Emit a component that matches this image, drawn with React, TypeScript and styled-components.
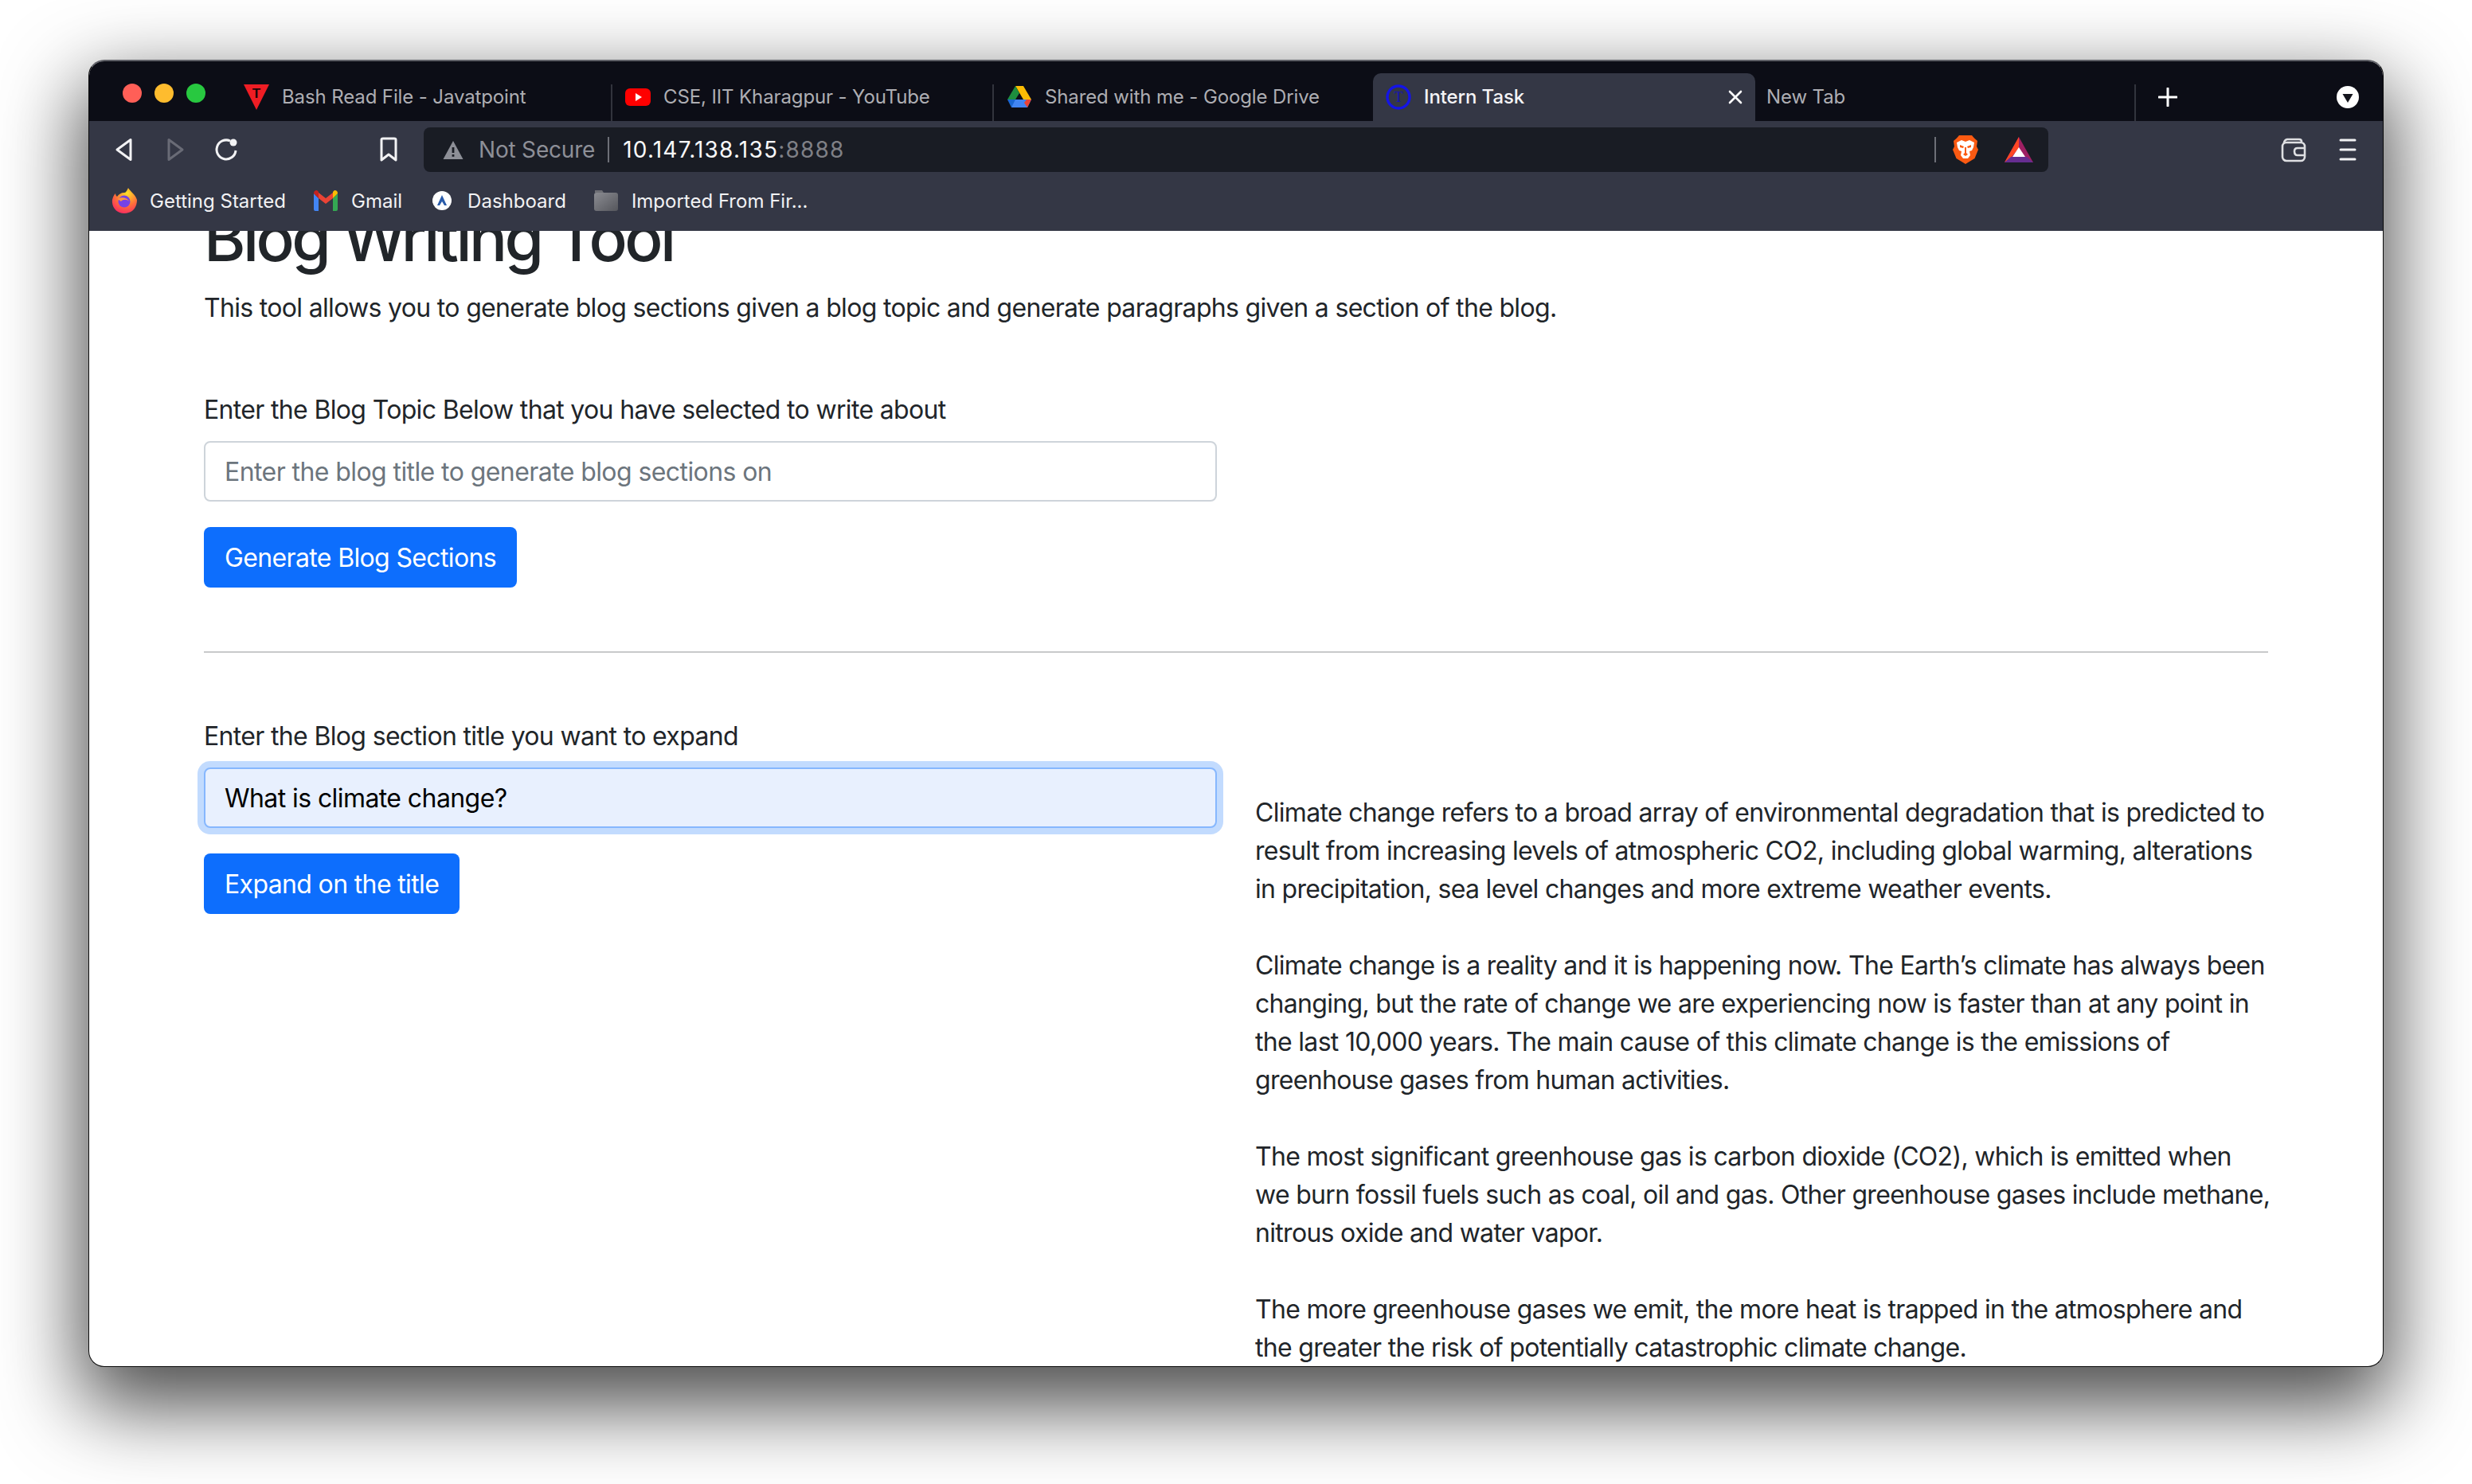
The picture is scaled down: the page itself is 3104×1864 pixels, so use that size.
import styled, { createGlobalStyle } from "styled-components";

const GlobalStyle = createGlobalStyle`
  html, body {
    margin: 0;
    padding: 0;
    background: #ffffff;
  }
  * {
    box-sizing: border-box;
  }
`;

const Stage = styled.div`
  width: 3104px;
  height: 1864px;
  padding: 75px 0 0 111px;
  background: #ffffff;
  overflow: hidden;
  font-family: Inter, "Liberation Sans", sans-serif;
`;

const Window = styled.div`
  display: flex;
  flex-direction: column;
  width: 2882px;
  height: 1642px;
  border: 1px solid #0a0a0a;
  border-top: 2px solid #5f6067;
  border-radius: 20px;
  overflow: hidden;
  background: #ffffff;
  box-shadow: 0 40px 100px 10px rgba(0, 0, 0, 0.7);
`;

const TabStrip = styled.div`
  display: flex;
  align-items: flex-end;
  flex: 0 0 75px;
  background: #0c0d16;
`;

const Lights = styled.div`
  display: flex;
  align-self: flex-start;
  gap: 16px;
  margin: 28px 32px 0 42px;
`;

const Light = styled.span<{ $color: string }>`
  width: 24px;
  height: 24px;
  border-radius: 50%;
  background: ${(props) => props.$color};
`;

const Tab = styled.div<{ $active?: boolean; $width: number; $plain?: boolean }>`
  display: flex;
  align-items: center;
  gap: 16px;
  flex: 0 0 ${(props) => props.$width}px;
  height: 60px;
  padding-left: ${(props) => (props.$plain ? 14 : 16)}px;
  padding-right: 16px;
  border-radius: 10px 10px 0 0;
  background: ${(props) => (props.$active ? "#343745" : "transparent")};
  color: ${(props) => (props.$active ? "#f4f4f6" : "#aeaeb3")};
  font-size: 24px;
  font-weight: ${(props) => (props.$active ? 500 : 400)};
  letter-spacing: -0.12px;
  white-space: nowrap;
`;

const TabTitle = styled.span`
  flex: 1;
  padding-bottom: 2px;
`;

const TabDivider = styled.span`
  flex: 0 0 2px;
  height: 46px;
  background: #32343d;
`;

const NewTabButton = styled.svg`
  width: 24px;
  height: 24px;
  margin: 0 0 18px 28px;
`;

const TabMenu = styled.svg`
  width: 28px;
  height: 38px;
  margin: 0 30px 11px auto;
`;

const Toolbar = styled.div`
  display: flex;
  align-items: center;
  flex: 0 0 72px;
  padding-left: 28px;
  background: #343745;
`;

const NavGroup = styled.div`
  display: flex;
  align-items: center;
  gap: 32px;
`;

const ToolIcon = styled.svg<{ $left?: number }>`
  width: 32px;
  height: 36px;
  flex: 0 0 32px;
  margin-left: ${(props) => props.$left ?? 0}px;
`;

const UrlBar = styled.div`
  display: flex;
  align-items: center;
  width: 2040px;
  height: 56px;
  margin-left: 28px;
  padding: 0 19px 0 24px;
  border-radius: 8px;
  background: #191c24;
  font-size: 28px;
`;

const WarnIcon = styled.svg`
  width: 26px;
  height: 24px;
  margin-right: 19px;
`;

const NotSecure = styled.span`
  color: #8d8f97;
  letter-spacing: -0.2px;
`;

const UrlDivider = styled.span`
  width: 2px;
  height: 32px;
  margin-left: 16px;
  background: #6d6f77;
`;

const UrlHost = styled.span`
  margin-left: 17px;
  color: #f8f8f8;
  letter-spacing: 1.2px;
`;

const UrlPort = styled.span`
  color: #7f8086;
`;

const RightDivider = styled(UrlDivider)`
  margin-left: auto;
`;

const ShieldIcon = styled.svg`
  width: 32px;
  height: 36px;
  margin-left: 21px;
`;

const BatIcon = styled.svg`
  width: 36px;
  height: 32px;
  margin-left: 33px;
`;

const BookmarkBar = styled.div`
  display: flex;
  align-items: center;
  gap: 34px;
  flex: 0 0 66px;
  padding: 0 0 10px 28px;
  background: #343745;
  color: #f2f2f4;
  font-size: 24px;
`;

const Bookmark = styled.div`
  display: flex;
  align-items: center;
  gap: 16px;
  white-space: nowrap;
`;

const BookmarkIcon = styled.svg`
  width: 32px;
  height: 32px;
  flex: 0 0 32px;
`;

const Content = styled.div`
  flex: 1;
  min-height: 0;
  padding: 0 144px;
  overflow: hidden;
  color: #212529;
  font-size: 32px;
  line-height: 48px;
  letter-spacing: -0.66px;
`;

const Heading = styled.h1`
  margin: -39px 0 16px;
  font-size: 80px;
  font-weight: 500;
  line-height: 96px;
  letter-spacing: -3.6px;
`;

const Lead = styled.p`
  margin: 0 0 80px;
  letter-spacing: -0.68px;
`;

const Label = styled.label`
  display: block;
  margin-bottom: 15px;
`;

const Field = styled.input<{ $focused?: boolean }>`
  display: block;
  width: 1272px;
  height: 76px;
  padding: 0 24px;
  border: 2px solid ${(props) => (props.$focused ? "#86b7fe" : "#ced4da")};
  border-radius: 8px;
  outline: none;
  background: ${(props) => (props.$focused ? "#e8f0fe" : "#ffffff")};
  box-shadow: ${(props) =>
    props.$focused ? "0 0 0 8px rgba(13, 110, 253, 0.25)" : "none"};
  color: #000000;
  font-family: inherit;
  font-size: 32px;
  letter-spacing: -0.58px;

  &::placeholder {
    color: #6c757d;
    opacity: 1;
  }
`;

const PrimaryButton = styled.button`
  display: block;
  height: 76px;
  margin-top: 32px;
  padding: 0 26px;
  border: 0;
  border-radius: 8px;
  background: #0d6efd;
  color: #ffffff;
  font-family: inherit;
  font-size: 32px;
  letter-spacing: -0.64px;
`;

const Rule = styled.hr`
  height: 2px;
  margin: 80px 0 81px;
  border: 0;
  background: #c8c9ca;
`;

const Columns = styled.div`
  display: grid;
  grid-template-columns: 1272px 1272px;
  column-gap: 48px;
`;

const Output = styled.div`
  padding-top: 96px;
  letter-spacing: -0.69px;
`;

const OutputPara = styled.p`
  margin: 0 0 48px;
  white-space: nowrap;
`;

const paragraphs = [
  [
    "Climate change refers to a broad array of environmental degradation that is predicted to",
    "result from increasing levels of atmospheric CO2, including global warming, alterations",
    "in precipitation, sea level changes and more extreme weather events.",
  ],
  [
    "Climate change is a reality and it is happening now. The Earth\u2019s climate has always been",
    "changing, but the rate of change we are experiencing now is faster than at any point in",
    "the last 10,000 years. The main cause of this climate change is the emissions of",
    "greenhouse gases from human activities.",
  ],
  [
    "The most significant greenhouse gas is carbon dioxide (CO2), which is emitted when",
    "we burn fossil fuels such as coal, oil and gas. Other greenhouse gases include methane,",
    "nitrous oxide and water vapor.",
  ],
  [
    "The more greenhouse gases we emit, the more heat is trapped in the atmosphere and",
    "the greater the risk of potentially catastrophic climate change.",
  ],
];

function App() {
  return (
    <>
      <GlobalStyle />
      <Stage>
        <Window>
          <TabStrip>
            <Lights>
              <Light $color="#ff5f57" />
              <Light $color="#febc2e" />
              <Light $color="#28c840" />
            </Lights>
            <Tab $width={477}>
              <BookmarkIcon viewBox="0 0 32 32">
                <path d="M0 0H32L16 32Z" fill="#ef1d24" />
                <text x="16" y="17" textAnchor="middle" fontSize="17" fontWeight="700" fontFamily="Liberation Sans" fill="#1b0708">T</text>
              </BookmarkIcon>
              <TabTitle>Bash Read File - Javatpoint</TabTitle>
            </Tab>
            <TabDivider />
            <Tab $width={477}>
              <BookmarkIcon viewBox="0 0 32 32">
                <rect x="0" y="5" width="32" height="22" rx="6" fill="#ff0000" />
                <path d="M13 11L21 16L13 21Z" fill="#ffffff" />
              </BookmarkIcon>
              <TabTitle>CSE, IIT Kharagpur - YouTube</TabTitle>
            </Tab>
            <TabDivider />
            <Tab $width={476}>
              <BookmarkIcon viewBox="0 0 32 32">
                <path d="M11 2H21L31 19H21Z" fill="#fbbc04" />
                <path d="M11 2L16 11L11 19H1Z" fill="#1e8e3e" />
                <path d="M8 19H31L26 29H6Z" fill="#4285f4" />
                <path d="M1 19L6 29L11 19Z" fill="#1967d2" />
                <path d="M25 19H31L26 29L22 23Z" fill="#ea4335" />
              </BookmarkIcon>
              <TabTitle>Shared with me - Google Drive</TabTitle>
            </Tab>
            <Tab $active $width={480}>
              <BookmarkIcon viewBox="0 0 32 32">
                <circle cx="16" cy="16" r="14" fill="none" stroke="#1414e6" strokeWidth="3.4" />
                <text x="16" y="22" textAnchor="middle" fontSize="18" fontFamily="Liberation Serif" fill="#1414b4">T</text>
              </BookmarkIcon>
              <TabTitle>Intern Task</TabTitle>
              <svg width="18" height="18" viewBox="0 0 18 18">
                <path d="M2 2L16 16M16 2L2 16" stroke="#ffffff" strokeWidth="2.6" strokeLinecap="round" />
              </svg>
            </Tab>
            <Tab $plain $width={476}>
              <TabTitle>New Tab</TabTitle>
            </Tab>
            <TabDivider />
            <NewTabButton viewBox="0 0 24 24">
              <path d="M12 1V23M1 12H23" stroke="#ffffff" strokeWidth="3" strokeLinecap="round" />
            </NewTabButton>
            <TabMenu viewBox="0 0 28 28">
              <circle cx="14" cy="14" r="14" fill="#ffffff" />
              <path d="M7.5 10H20.5L14 21Z" fill="#14151d" />
            </TabMenu>
          </TabStrip>
          <Toolbar>
            <NavGroup>
              <ToolIcon viewBox="0 0 32 36">
                <path d="M24 5.5V30.5L7 18Z" fill="none" stroke="#f2f2f4" strokeWidth="3" strokeLinejoin="round" />
              </ToolIcon>
              <ToolIcon viewBox="0 0 32 36">
                <path d="M8 5.5V30.5L25 18Z" fill="none" stroke="#696b76" strokeWidth="3" strokeLinejoin="round" />
              </ToolIcon>
              <ToolIcon viewBox="0 0 32 36">
                <path d="M21 7A12 12 0 1 0 28 19" fill="none" stroke="#f2f2f4" strokeWidth="3" />
                <circle cx="25" cy="9" r="4.5" fill="#f2f2f4" />
              </ToolIcon>
            </NavGroup>
            <ToolIcon $left={172} viewBox="0 0 32 36">
              <path d="M7 5.5Q7 4 9 4H23Q25 4 25 5.5V31L16 24L7 31Z" fill="none" stroke="#f2f2f4" strokeWidth="3" strokeLinejoin="round" />
            </ToolIcon>
            <UrlBar>
              <WarnIcon viewBox="0 0 26 24">
                <path d="M13 1L25.5 24H0.5Z" fill="#8d8f97" />
                <rect x="11.6" y="9" width="2.8" height="7" fill="#191c24" />
                <rect x="11.6" y="18" width="2.8" height="2.8" fill="#191c24" />
              </WarnIcon>
              <NotSecure>Not Secure</NotSecure>
              <UrlDivider />
              <UrlHost>
                10.147.138.135<UrlPort>:8888</UrlPort>
              </UrlHost>
              <RightDivider />
              <ShieldIcon viewBox="0 0 32 36">
                <path d="M8 0H24L27 3.5L31 7L30 14L32 18L27.5 29L16 36L4.5 29L0 18L2 14L1 7L5 3.5Z" fill="#fb5a12" />
                <path d="M5 9L11 6L16 8L21 6L27 9L26 15L24 19L21 20L22 25L19 29H13L10 25L11 20L8 19L6 15Z" fill="#ffffff" />
                <path d="M9 12L14 14L13 16L9 15ZM23 12L18 14L19 16L23 15ZM15 15H17V22L19 24L16 26L13 24L15 22Z" fill="#fb5a12" />
              </ShieldIcon>
              <BatIcon viewBox="0 0 36 32">
                <path d="M18 0L36 32H0Z" fill="#9e1f63" />
                <path d="M18 0V14L8 26L0 32Z" fill="#ff4724" />
                <path d="M0 32L8 25H28L36 32Z" fill="#662d91" />
                <path d="M18 13L26 25H10Z" fill="#ffffff" />
              </BatIcon>
            </UrlBar>
            <ToolIcon $left={292} viewBox="0 0 32 36">
              <path d="M4 10Q4 6 8 5H23Q26 5 26 8" fill="none" stroke="#dedfe2" strokeWidth="2.6" />
              <rect x="2" y="9" width="28" height="23" rx="5" fill="none" stroke="#dedfe2" strokeWidth="2.6" />
              <path d="M30 16H21Q17 16 17 20Q17 25 21 25H30" fill="none" stroke="#dedfe2" strokeWidth="2.6" />
            </ToolIcon>
            <ToolIcon $left={36} viewBox="0 0 32 36">
              <path d="M7 6H25M7 18H25M7 30H25" stroke="#f2f2f4" strokeWidth="3" strokeLinecap="round" />
            </ToolIcon>
          </Toolbar>
          <BookmarkBar>
            <Bookmark>
              <BookmarkIcon viewBox="0 0 32 32">
                <defs>
                  <radialGradient id="fox" cx="0.6" cy="0.2" r="0.95">
                    <stop offset="0" stopColor="#ffe226" />
                    <stop offset="0.5" stopColor="#ff7139" />
                    <stop offset="1" stopColor="#f5156c" />
                  </radialGradient>
                </defs>
                <path d="M21 0C23 4 30 8 32 15C32 26 25 32 16 32C7 32 0 25 1 15C2 11 3 9 5 7C5 9 6 10 7 11C9 8 12 6 16 6C18 6 19 4 21 0Z" fill="url(#fox)" />
                <circle cx="16" cy="17" r="7.5" fill="#7542e5" />
                <path d="M8 14C12 11 20 12 22 17C20 14 14 14 12 17Z" fill="#ff9640" />
              </BookmarkIcon>
              Getting Started
            </Bookmark>
            <Bookmark>
              <BookmarkIcon viewBox="0 0 32 32">
                <path d="M1 7V27Q1 29 3 29H7V13Z" fill="#4285f4" />
                <path d="M25 13V29H29Q31 29 31 27V7Z" fill="#34a853" />
                <path d="M7 13L16 20L25 13V6L16 13L7 6Z" fill="#ea4335" />
                <path d="M1 7Q1 3 5 3L7 5V13Z" fill="#c5221f" />
                <path d="M31 7Q31 3 27 3L25 5V13Z" fill="#fbbc04" />
              </BookmarkIcon>
              Gmail
            </Bookmark>
            <Bookmark>
              <BookmarkIcon viewBox="0 0 32 32">
                <circle cx="16" cy="16" r="12" fill="#ffffff" />
                <path d="M16 9L22 22H19L16 17L13 22H10Z" fill="#2a5caa" />
              </BookmarkIcon>
              Dashboard
            </Bookmark>
            <Bookmark>
              <BookmarkIcon viewBox="0 0 32 32">
                <defs>
                  <linearGradient id="folder" x1="0" y1="0" x2="1" y2="1">
                    <stop offset="0" stopColor="#8b8c92" />
                    <stop offset="1" stopColor="#55565c" />
                  </linearGradient>
                </defs>
                <path d="M2 3H11L13 6H2Z" fill="#6e6f75" />
                <rect x="1" y="6" width="30" height="23" rx="3" fill="url(#folder)" />
              </BookmarkIcon>
              Imported From Fir...
            </Bookmark>
          </BookmarkBar>
          <Content>
            <Heading>Blog Writing Tool</Heading>
            <Lead>
              This tool allows you to generate blog sections given a blog topic
              and generate paragraphs given a section of the blog.
            </Lead>
            <Label>Enter the Blog Topic Below that you have selected to write about</Label>
            <Field placeholder="Enter the blog title to generate blog sections on" readOnly />
            <PrimaryButton>Generate Blog Sections</PrimaryButton>
            <Rule />
            <Columns>
              <div>
                <Label>Enter the Blog section title you want to expand</Label>
                <Field $focused value="What is climate change?" readOnly />
                <PrimaryButton>Expand on the title</PrimaryButton>
              </div>
              <Output>
                {paragraphs.map((lines) => (
                  <OutputPara key={lines[0]}>
                    {lines.map((line) => (
                      <span key={line}>
                        {line}
                        <br />
                      </span>
                    ))}
                  </OutputPara>
                ))}
              </Output>
            </Columns>
          </Content>
        </Window>
      </Stage>
    </>
  );
}

export default App;
